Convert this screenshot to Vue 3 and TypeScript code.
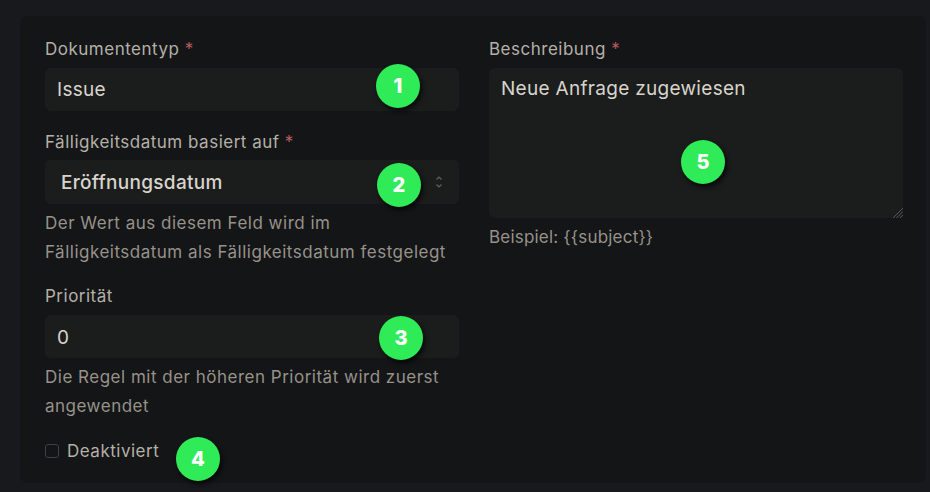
<script setup lang="ts">
const badges = [
  { n: 1, x: 398, y: 86 },
  { n: 2, x: 399, y: 185 },
  { n: 3, x: 401, y: 338 },
  { n: 4, x: 198, y: 459 },
  { n: 5, x: 703, y: 162 },
]
</script>

<template>
  <div class="page">
    <div class="card">
      <div class="col">
        <div class="label">Dokumententyp <span class="req">*</span></div>
        <div class="input">Issue</div>
        <div class="label mt-select">Fälligkeitsdatum basiert auf <span class="req">*</span></div>
        <div class="input select">
          <span>Eröffnungsdatum</span>
          <svg class="chev" width="10" height="16" viewBox="0 0 10 16" fill="none" stroke="#5d6064" stroke-width="1.2">
            <path d="M2.500 5.500 5 3l2.500 2.500" />
            <path d="M2.500 10.500 5 13l2.500-2.500" />
          </svg>
        </div>
        <div class="help after-select">Der Wert aus diesem Feld wird im<br />Fälligkeitsdatum als Fälligkeitsdatum festgelegt</div>
        <div class="label mt-prio">Priorität</div>
        <div class="input prio">0</div>
        <div class="help after-prio">Die Regel mit der höheren Priorität wird zuerst angewendet</div>
        <label class="check"><span class="box"></span><span>Deaktiviert</span></label>
      </div>
      <div class="col">
        <div class="label">Beschreibung <span class="req">*</span></div>
        <div class="textarea">
          Neue Anfrage zugewiesen
          <svg class="grip" width="10" height="10" viewBox="0 0 10 10" stroke="#55585a" stroke-width="1">
            <path d="M0 10 10 0M3.500 10 10 3.500M7 10l3-3" />
          </svg>
        </div>
        <div class="help sample">Beispiel: {{ '{' + '{subject}' + '}' }}</div>
      </div>
    </div>
    <div
      v-for="b in badges"
      :key="b.n"
      class="badge"
      :style="{ left: b.x - 22 + 'px', top: b.y - 22 + 'px' }"
    >{{ b.n }}</div>
  </div>
</template>

<style>
html, body { margin: 0; background: #17191c; }
</style>

<style scoped>
.page {
  position: relative;
  width: 930px;
  height: 492px;
  overflow: hidden;
  background: #17191c;
  padding: 16px 4px 9px 20px;
  box-sizing: border-box;
  font-family: Inter, "Noto Sans", sans-serif;
  font-size: 17px;
  letter-spacing: 0.5px;
}
.card {
  height: 100%;
  box-sizing: border-box;
  background: #141517;
  border-radius: 8px;
  padding: 22px 23px 0 25px;
  display: grid;
  grid-template-columns: 414px 414px;
  column-gap: 30px;
  align-items: start;
}
.col { display: flex; flex-direction: column; }
.label {
  color: #b5b0a8;
  line-height: 22px;
  margin-bottom: 8px;
}
.req { color: #b85c5c; }
.mt-select { margin-top: 20px; margin-bottom: 7px; }
.mt-prio { margin-top: 18px; margin-bottom: 8px; }
.input {
  height: 43px;
  box-sizing: border-box;
  background: #1b1d1d;
  border-radius: 6px;
  padding: 0 12px;
  display: flex;
  align-items: center;
  color: #d8d4cc;
  font-size: 19px;
  letter-spacing: 0.3px;
}
.prio { padding-top: 2px; }
.select {
  height: 44px;
  padding: 0 15px 0 16px;
  justify-content: space-between;
  font-weight: 500;
  color: #d8d4cc;
}
.help {
  color: #97928a;
  line-height: 29px;
  margin-top: 4px;
}
.after-select { margin-top: 5px; }
.after-prio { margin-top: 5px; }
.sample { letter-spacing: 0.2px; margin-top: 5px; }
.check {
  display: flex;
  align-items: center;
  gap: 8px;
  margin-top: 18px;
  color: #b5b0a8;
  line-height: 24px;
}
.box {
  width: 14px;
  height: 14px;
  box-sizing: border-box;
  border: 1px solid #3e4043;
  border-radius: 3px;
}
.textarea {
  position: relative;
  height: 150px;
  box-sizing: border-box;
  background: #1b1d1d;
  border-radius: 6px;
  padding: 8px 12px;
  color: #d8d4cc;
  font-size: 19px;
  line-height: 26px;
  letter-spacing: 0.3px;
}
.grip { position: absolute; right: 0; bottom: 0; }
.badge {
  position: absolute;
  width: 44px;
  height: 44px;
  border-radius: 50%;
  background: #30eb58;
  color: #fff;
  font-weight: 800;
  font-size: 20px;
  letter-spacing: 0;
  display: flex;
  align-items: center;
  justify-content: center;
  box-shadow: 2px 3px 5px rgba(0, 0, 0, 0.75);
}
</style>
